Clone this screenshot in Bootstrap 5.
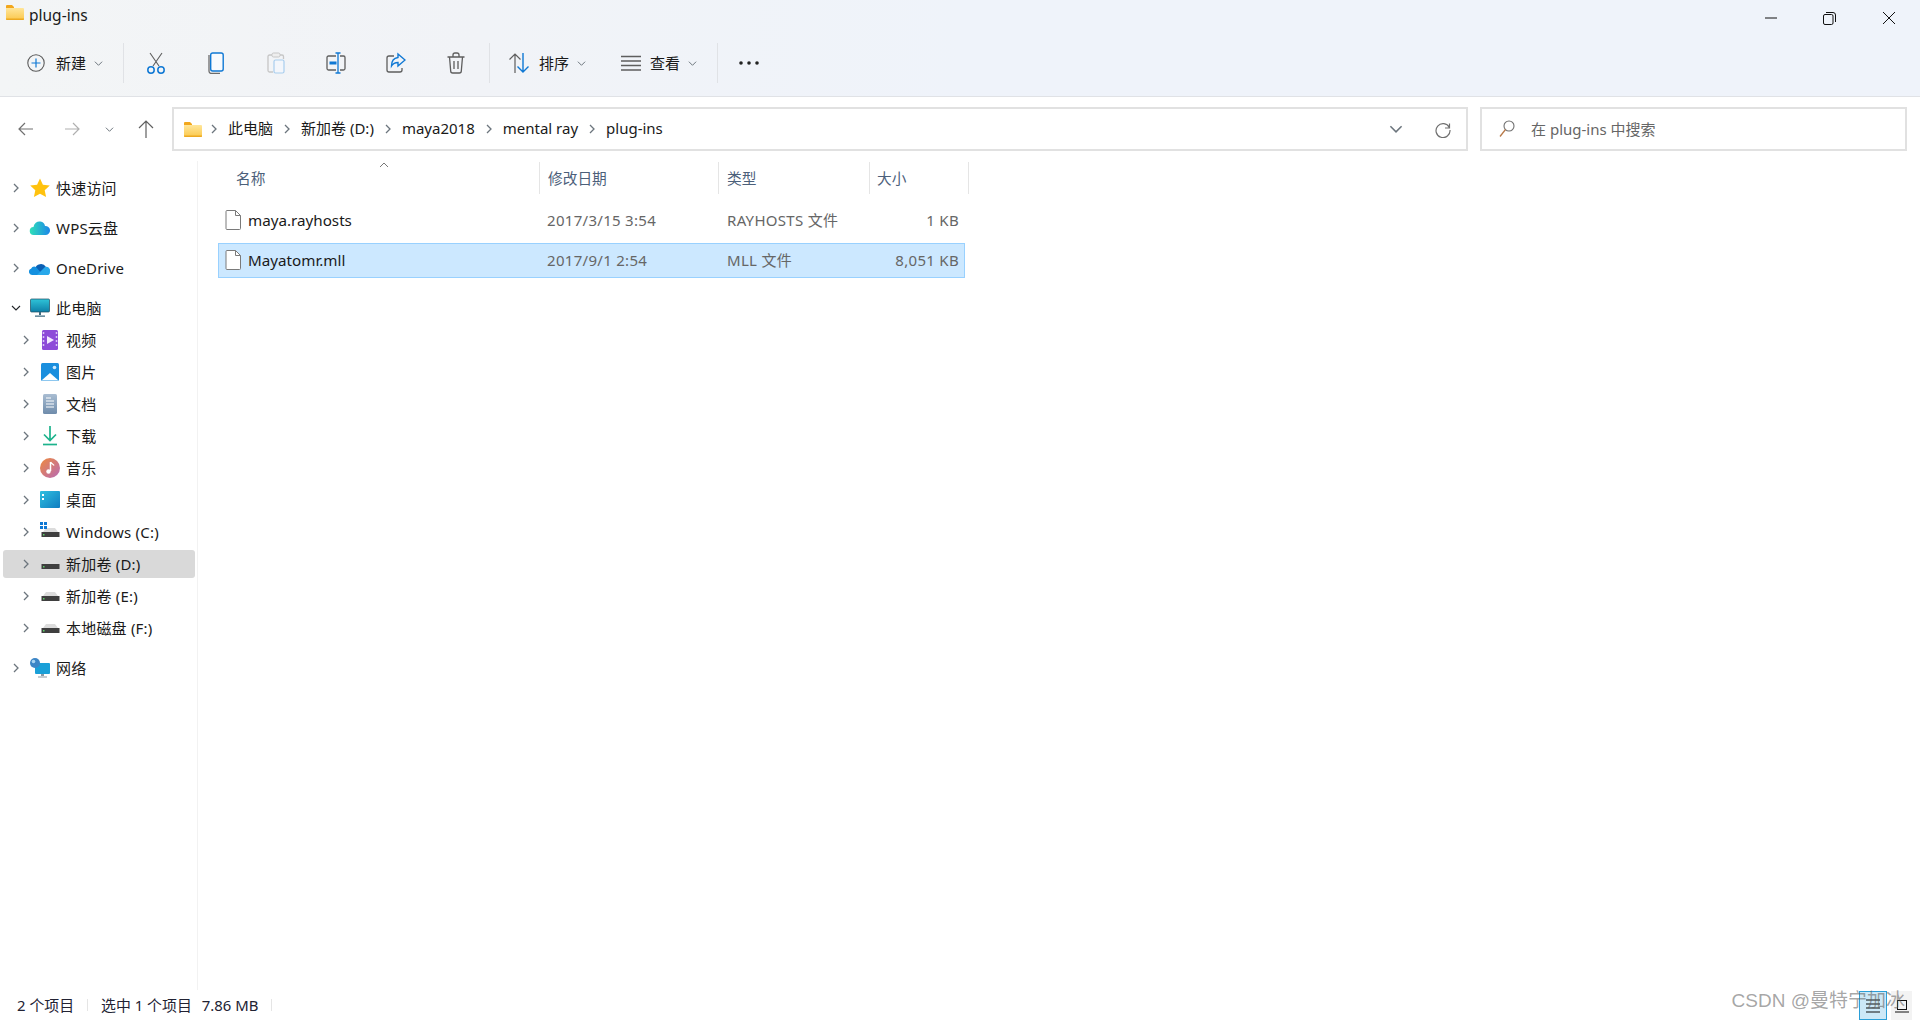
<!doctype html>
<html lang="zh">
<head>
<meta charset="utf-8">
<title>plug-ins</title>
<link href="https://cdn.jsdelivr.net/npm/bootstrap@5.3.0/dist/css/bootstrap.min.css" rel="stylesheet">
<style>
html,body{height:100%;margin:0}
body{font-family:"Noto Sans","Noto Sans CJK SC",sans-serif;font-size:15px;color:#1a1a1a;background:#fff;overflow:hidden;position:relative}
.shell{height:1020px}
.top-zone{height:97px;background:linear-gradient(90deg,#f3f5f6 0,#f1f3f7 25%,#eff3fa 50%,#eff3fa 100%);border-bottom:1px solid #e0e2e6}
.title-row{height:33px;padding-left:6px}
.title-text{margin-left:5px;font-size:15.5px;line-height:30px}
.win-btn{width:59px;height:36px;margin-top:0}
.win-btns{margin-right:2px}
.tool-row{height:63px;padding-bottom:3px}
.new-btn{width:111px;margin-left:12px}
.new-plus{margin-left:15px}
.tool-sep{width:1px;height:40px;background:#e0e2e6;margin:0 2px 0 0}
.sep-after{margin-left:3px}
.tool-icon{width:60px}
.tool-text{font-size:15px;margin:0 8px 0 9px}
.new-text{margin:0 8px 0 11px;font-size:15px}
.sort-btn{width:109px;margin-left:2px;padding-left:14px}
.view-btn{width:114px;padding-left:18px}
.more-btn{width:58px}
.addr-row{height:64px;padding-top:10px}
.nav-btn{width:46px;height:44px}
.nav-start{margin-left:3px}
.nav-small{width:28px}
.addr-box{width:1296px;height:44px;border:2px solid #e1e1e1;margin-left:3px;padding-left:10px;padding-bottom:1px}
.addr-crumb{font-size:15px;line-height:1}
.addr-sep{margin:0 9px}
.addr-sep-first{margin:0 9px 0 7px}
.addr-drop{margin:0 0 0 auto}
.addr-refresh{margin:0 14px 0 31px}
.search-box{width:427px;height:44px;border:2px solid #e1e1e1;margin-left:12px;padding-left:17px;color:#666;font-size:15px}
.search-label{margin-left:16px}
.body-row{height:829px}
.side{width:198px;border-right:1px solid #f2f2f2;padding-top:11px;flex:none}
.tree-row{height:32px;padding-left:11px}
.tree-sub{padding-left:21px}
.tree-gap{margin-bottom:8px}
.tree-text{margin-left:0;font-size:15px;letter-spacing:.2px;white-space:nowrap}
.tree-ic{width:22px;height:22px;margin:0 5px 0 8px;flex:none}
.tree-sel{height:32px;position:relative}
.tree-sel::before{content:"";position:absolute;left:3px;width:192px;top:2px;height:28px;background:#d9d9d9;border-radius:3px}
.tree-sel>*{position:relative}
.content-area{padding:1px 0 0 21px}
.col-hdr{height:32px;color:#4c607a;font-size:14.7px;position:relative}
.col-name{width:321px;padding-left:17px}
.col-date{width:179px;padding-left:8px}
.col-type{width:151px;padding-left:8px}
.col-size{width:99px;padding-left:7px}
.col-cell{border-right:1px solid #e5e5e5;height:32px}
.sort-caret{position:absolute;left:160px;top:0}
.list-rows{padding-top:9px;width:747px;margin-left:-1px}
.file-row{height:35px;border:1px solid transparent;color:#666;font-size:15px;letter-spacing:.3px;margin-bottom:5px}
.file-row.is-sel{background:#cce8ff;border-color:#99d1ff}
.f-name{width:328px;padding-left:6px;color:#1a1a1a;letter-spacing:0}
.f-label{margin-left:7px;font-size:15.2px}
.f-date{width:179px}
.f-type{width:151px;padding-left:1px}
.f-size{width:82px}
.status-row{height:30px;font-size:14.9px;color:#223;padding-left:17px;position:relative}
.st-sep{width:1px;height:12px;background:#e5e5e5;margin:0 13px 0 13px}
.st-size{margin-left:10px}
.wm{position:absolute;right:15px;bottom:5px;font-size:19px;color:rgba(90,90,90,.55);white-space:nowrap;font-family:"Liberation Sans","Noto Sans CJK SC",sans-serif;z-index:3}
.view-a,.view-b{position:absolute;bottom:0;height:29px}
.view-a{left:1859px;width:28px;background:#cce8f7;border:1px solid #2b9fd8}
.view-b{left:1891px;width:21px;background:#f3f3f3}
</style>
</head>
<body>
<svg width="0" height="0" class="position-absolute">
<defs>
<linearGradient id="fold" x1="0" y1="0" x2="0" y2="1"><stop offset="0" stop-color="#ffe69a"/><stop offset="1" stop-color="#fbc84d"/></linearGradient>
<symbol id="i-folder" viewBox="0 0 18 16"><path d="M0 2a1 1 0 0 1 1-1h5l2 2v2H0z" fill="#f2a71d"/><path d="M0 4h17a1 1 0 0 1 1 1v10a1 1 0 0 1-1 1H1a1 1 0 0 1-1-1z" fill="url(#fold)"/><path d="M0 14.600h18V15a1 1 0 0 1-1 1H1a1 1 0 0 1-1-1z" fill="#eda921"/></symbol>
<symbol id="chev-r" viewBox="0 0 10 10"><path d="M3 1l4 4-4 4" fill="none" stroke="currentColor" stroke-width="1.300"/></symbol>
<symbol id="chev-d" viewBox="0 0 10 10"><path d="M1 3l4 4 4-4" fill="none" stroke="currentColor" stroke-width="1.100"/></symbol>
<symbol id="i-file" viewBox="0 0 16 20"><path d="M1 1.500a1 1 0 0 1 1-1h8.500L15.500 5.500V18.500a1 1 0 0 1-1 1H2a1 1 0 0 1-1-1z" fill="#fff" stroke="#7a7a7a"/><path d="M10.500 .5v5h5" fill="none" stroke="#7a7a7a"/></symbol>
<symbol id="i-disk" viewBox="0 0 22 22"><path d="M4 11l3-4h9l3 4z" fill="#dcdcdc"/><rect x="2.500" y="11" width="18" height="5" fill="#3f3f3f"/><rect x="4" y="13" width="1.500" height="1.500" fill="#5fd06a"/></symbol>
</defs>
</svg>
<div class="shell d-flex flex-column">
  <div class="top-zone flex-none">
    <div class="title-row d-flex align-items-start">
      <svg width="18" height="16" class="mt-1"><use href="#i-folder"/></svg>
      <span class="title-text">plug-ins</span>
      <div class="win-btns ms-auto d-flex">
        <div class="win-btn d-flex align-items-center justify-content-center"><svg width="12" height="12" viewBox="0 0 12 12"><path d="M0 6h12" stroke="#111" stroke-width="1"/></svg></div>
        <div class="win-btn d-flex align-items-center justify-content-center"><svg width="13" height="13" viewBox="0 0 13 13"><rect x=".5" y="2.500" width="9.500" height="10" rx="1.500" fill="none" stroke="#111"/><path d="M3 .5h7a2.500 2.500 0 0 1 2.500 2.500v7" fill="none" stroke="#111"/></svg></div>
        <div class="win-btn d-flex align-items-center justify-content-center"><svg width="12" height="12" viewBox="0 0 12 12"><path d="M0 0l12 12M12 0L0 12" stroke="#111" stroke-width="1"/></svg></div>
      </div>
    </div>
    <div class="tool-row d-flex align-items-center">
      <div class="new-btn d-flex align-items-center">
        <svg width="18" height="18" viewBox="0 0 18 18" class="new-plus"><circle cx="9" cy="9" r="8.200" fill="none" stroke="#5a5a5a" stroke-width="1.100"/><path d="M9 4.500v9M4.500 9h9" stroke="#0f78d4" stroke-width="1.200"/></svg>
        <span class="new-text">新建</span>
        <svg width="9" height="9" class="text-secondary"><use href="#chev-d"/></svg>
      </div>
      <div class="tool-sep"></div>
      <div class="tool-icon d-flex justify-content-center"><svg width="20" height="22" viewBox="0 0 20 22"><path d="M4 1l9 13M16 1L7 14" stroke="#5e5e5e" stroke-width="1.100" fill="none"/><circle cx="5" cy="18" r="3.200" fill="none" stroke="#0f78d4" stroke-width="1.500"/><circle cx="15" cy="18" r="3.200" fill="none" stroke="#0f78d4" stroke-width="1.500"/></svg></div>
      <div class="tool-icon d-flex justify-content-center"><svg width="18" height="22" viewBox="0 0 18 22"><path d="M2 3v16a2.500 2.500 0 0 0 2.500 2.500H13" fill="none" stroke="#6b6b6b" stroke-width="1.300"/><rect x="3.700" y="1" width="12.500" height="18" rx="2" fill="#f8fafd" stroke="#0f78d4" stroke-width="1.400"/></svg></div>
      <div class="tool-icon d-flex justify-content-center"><svg width="18" height="22" viewBox="0 0 18 22"><path d="M5 3H2.500A1.500 1.500 0 0 0 1 4.500v14A1.500 1.500 0 0 0 2.500 20H6M13 3h2a1.500 1.500 0 0 1 1.500 1.500V7" fill="none" stroke="#c6c6c6" stroke-width="1.300"/><rect x="5" y="1" width="8" height="4" rx="1.500" fill="#eee" stroke="#c6c6c6"/><rect x="7" y="8" width="10" height="13" rx="1.500" fill="#f3f6fb" stroke="#a8cdee" stroke-width="1.200"/></svg></div>
      <div class="tool-icon d-flex justify-content-center"><svg width="20" height="22" viewBox="0 0 20 22"><path d="M10 4H2.500A1.500 1.500 0 0 0 1 5.500v11A1.500 1.500 0 0 0 2.500 18H10M14 4h3.500A1.500 1.500 0 0 1 19 5.500v11a1.500 1.500 0 0 1-1.500 1.500H14" fill="none" stroke="#5e5e5e" stroke-width="1.300"/><rect x="3.500" y="9.500" width="7" height="3" fill="#0f78d4"/><path d="M12 1v20M9.500 1h5M9.500 21h5" stroke="#0f78d4" stroke-width="1.300" fill="none"/></svg></div>
      <div class="tool-icon d-flex justify-content-center"><svg width="20" height="22" viewBox="0 0 20 22"><path d="M8 4H3a2 2 0 0 0-2 2v12a2 2 0 0 0 2 2h11a2 2 0 0 0 2-2v-2" fill="none" stroke="#5e5e5e" stroke-width="1.300"/><path d="M12 2l7 6-7 6v-3.500c-3 0-5 1-6.500 3.500 0-5 2.500-8 6.500-8.500z" fill="none" stroke="#0f78d4" stroke-width="1.400"/></svg></div>
      <div class="tool-icon d-flex justify-content-center"><svg width="20" height="22" viewBox="0 0 20 22"><path d="M1.500 5h17M7 5V3a2 2 0 0 1 2-2h2a2 2 0 0 1 2 2v2M3.500 5l1.200 14a2 2 0 0 0 2 2h6.600a2 2 0 0 0 2-2L16.500 5M8 9v8M12 9v8" fill="none" stroke="#5e5e5e" stroke-width="1.300"/></svg></div>
      <div class="tool-sep sep-after"></div>
      <div class="sort-btn d-flex align-items-center">
        <svg width="22" height="22" viewBox="0 0 22 22"><path d="M7 21V2M1.500 7.500L7 2l5.500 5.500" fill="none" stroke="#5e5e5e" stroke-width="1.200"/><path d="M15 1v19M9.500 14.500L15 20l5.500-5.500" fill="none" stroke="#0f78d4" stroke-width="1.400"/></svg>
        <span class="tool-text">排序</span>
        <svg width="9" height="9" class="text-secondary"><use href="#chev-d"/></svg>
      </div>
      <div class="view-btn d-flex align-items-center">
        <svg width="20" height="16" viewBox="0 0 20 16"><path d="M0 1.500h20M0 6h20M0 10.500h20M0 15h20" stroke="#5e5e5e" stroke-width="1.300"/></svg>
        <span class="tool-text">查看</span>
        <svg width="9" height="9" class="text-secondary"><use href="#chev-d"/></svg>
      </div>
      <div class="tool-sep"></div>
      <div class="more-btn d-flex justify-content-center"><svg width="20" height="4" viewBox="0 0 20 4"><circle cx="2" cy="2" r="1.800" fill="#222"/><circle cx="10" cy="2" r="1.800" fill="#222"/><circle cx="18" cy="2" r="1.800" fill="#222"/></svg></div>
    </div>
  </div>

  <div class="addr-row d-flex flex-none">
    <div class="nav-btn nav-start d-flex align-items-center justify-content-center"><svg width="16" height="14" viewBox="0 0 16 14"><path d="M15 7H1M7 1L1 7l6 6" fill="none" stroke="#707070" stroke-width="1.200"/></svg></div>
    <div class="nav-btn d-flex align-items-center justify-content-center"><svg width="16" height="14" viewBox="0 0 16 14"><path d="M1 7h14M9 1l6 6-6 6" fill="none" stroke="#b0b0b0" stroke-width="1.200"/></svg></div>
    <div class="nav-btn nav-small d-flex align-items-center justify-content-center"><svg width="9" height="9" class="text-secondary"><use href="#chev-d"/></svg></div>
    <div class="nav-btn d-flex align-items-center justify-content-center"><svg width="16" height="18" viewBox="0 0 16 18"><path d="M8 18V1M1 8l7-7 7 7" fill="none" stroke="#606060" stroke-width="1.200"/></svg></div>
    <div class="addr-box d-flex align-items-center addr-crumb">
      <svg width="18" height="16"><use href="#i-folder"/></svg>
      <svg width="10" height="10" class="addr-sep-first text-secondary"><use href="#chev-r"/></svg><span>此电脑</span>
      <svg width="10" height="10" class="addr-sep text-secondary"><use href="#chev-r"/></svg><span>新加卷 (D:)</span>
      <svg width="10" height="10" class="addr-sep text-secondary"><use href="#chev-r"/></svg><span>maya2018</span>
      <svg width="10" height="10" class="addr-sep text-secondary"><use href="#chev-r"/></svg><span>mental ray</span>
      <svg width="10" height="10" class="addr-sep text-secondary"><use href="#chev-r"/></svg><span>plug-ins</span>
      <svg width="14" height="14" class="addr-drop text-secondary"><use href="#chev-d"/></svg>
      <svg width="18" height="18" viewBox="0 0 18 18" class="addr-refresh"><path d="M15.500 3.500V8H11M15.300 7.500A7 7 0 1 0 16 10" fill="none" stroke="#707070" stroke-width="1.200"/></svg>
    </div>
    <div class="search-box d-flex align-items-center">
      <svg width="16" height="18" viewBox="0 0 16 18"><circle cx="10" cy="6" r="5" fill="none" stroke="#707070" stroke-width="1.100"/><path d="M6.500 9.500L1 16.500" stroke="#b87a4a" stroke-width="1.300"/></svg>
      <span class="search-label">在 plug-ins 中搜索</span>
    </div>
  </div>

  <div class="body-row d-flex flex-grow-1">
    <div class="side">
      <div class="tree-row tree-gap d-flex align-items-center"><svg width="10" height="10" class="text-secondary"><use href="#chev-r"/></svg><svg class="tree-ic" viewBox="0 0 22 22"><path d="M11 1.500l2.900 6.300 6.900.8-5.100 4.700 1.400 6.800-6.100-3.400-6.100 3.400 1.400-6.800L1.200 8.600l6.900-.8z" fill="#ffc20e"/></svg><span class="tree-text">快速访问</span></div>
      <div class="tree-row tree-gap d-flex align-items-center"><svg width="10" height="10" class="text-secondary"><use href="#chev-r"/></svg><svg class="tree-ic" viewBox="0 0 22 22"><defs><linearGradient id="wps" x1="0" y1="0" x2="1" y2="0"><stop offset="0" stop-color="#2fe0b8"/><stop offset="1" stop-color="#1c86e8"/></linearGradient></defs><path d="M5 18a4 4 0 0 1-.500-8 6 6 0 0 1 7-5.500 5.500 5.500 0 0 1 4.500 4.500 4.500 4.500 0 0 1 1 9z" fill="url(#wps)"/></svg><span class="tree-text">WPS云盘</span></div>
      <div class="tree-row tree-gap d-flex align-items-center"><svg width="10" height="10" class="text-secondary"><use href="#chev-r"/></svg><svg class="tree-ic" viewBox="0 0 22 22"><path d="M6 12a6 6 0 0 1 11-2l-6 6-7-2z" fill="#0a5fb4"/><path d="M3 18a3.200 3.200 0 0 1-1-6.200A4 4 0 0 1 7 10l7 8z" fill="#1490df"/><path d="M8 18l8-8a3.800 3.800 0 0 1 5 4.500 3.500 3.500 0 0 1-1.500 3.500z" fill="#28a8ea"/></svg><span class="tree-text">OneDrive</span></div>
      <div class="tree-row d-flex align-items-center"><svg width="10" height="10" class="text-dark"><use href="#chev-d"/></svg><svg class="tree-ic" viewBox="0 0 22 22"><defs><linearGradient id="mon" x1="0" y1="0" x2="0" y2="1"><stop offset="0" stop-color="#2fc4d8"/><stop offset="1" stop-color="#0e7fa8"/></linearGradient></defs><rect x="1.500" y="2" width="19" height="13" rx="1" fill="url(#mon)" stroke="#1c4a5e" stroke-width=".7"/><path d="M10 15h2v3h-2zM6 18.500h10v1.200H6z" fill="#3d6a80"/></svg><span class="tree-text">此电脑</span></div>
      <div class="tree-row tree-sub d-flex align-items-center"><svg width="10" height="10" class="text-secondary"><use href="#chev-r"/></svg><svg class="tree-ic" viewBox="0 0 22 22"><rect x="3" y="1" width="16" height="20" rx="1.500" fill="#8d4bd8"/><path d="M8 7l7 4-7 4z" fill="#f2e8ff"/><path d="M4.500 3v16M17.500 3v16" stroke="#d8c2f5" stroke-width="1.500" stroke-dasharray="2 2"/></svg><span class="tree-text">视频</span></div>
      <div class="tree-row tree-sub d-flex align-items-center"><svg width="10" height="10" class="text-secondary"><use href="#chev-r"/></svg><svg class="tree-ic" viewBox="0 0 22 22"><rect x="2" y="2" width="18" height="18" rx="1.500" fill="#1b8fde"/><path d="M2.500 19.500L11 12l8.500 7.500z" fill="#fff"/><circle cx="15.500" cy="6.500" r="1.800" fill="#cfeaff"/></svg><span class="tree-text">图片</span></div>
      <div class="tree-row tree-sub d-flex align-items-center"><svg width="10" height="10" class="text-secondary"><use href="#chev-r"/></svg><svg class="tree-ic" viewBox="0 0 22 22"><defs><linearGradient id="doc" x1="0" y1="0" x2="0" y2="1"><stop offset="0" stop-color="#a9bdd2"/><stop offset="1" stop-color="#6f8cab"/></linearGradient></defs><rect x="4" y="1" width="14" height="20" rx="1.500" fill="url(#doc)"/><path d="M7 8h8M7 11h8M7 14h8M7 5h5" stroke="#fff" stroke-width="1"/></svg><span class="tree-text">文档</span></div>
      <div class="tree-row tree-sub d-flex align-items-center"><svg width="10" height="10" class="text-secondary"><use href="#chev-r"/></svg><svg class="tree-ic" viewBox="0 0 22 22"><path d="M11 1v14M5 9.500l6 6 6-6" fill="none" stroke="#1db38c" stroke-width="1.700"/><path d="M4 19.500h14" stroke="#1db38c" stroke-width="1.700"/></svg><span class="tree-text">下载</span></div>
      <div class="tree-row tree-sub d-flex align-items-center"><svg width="10" height="10" class="text-secondary"><use href="#chev-r"/></svg><svg class="tree-ic" viewBox="0 0 22 22"><defs><linearGradient id="mus" x1="0" y1="0" x2="1" y2="1"><stop offset="0" stop-color="#ef8a3c"/><stop offset="1" stop-color="#b76ab8"/></linearGradient></defs><circle cx="11" cy="11" r="10" fill="url(#mus)"/><path d="M11.500 5v9" stroke="#fff" stroke-width="1.500"/><path d="M11.500 5c1 2 3 2 3.500 3.500" fill="none" stroke="#fff" stroke-width="1.300"/><circle cx="9.500" cy="14.500" r="2.200" fill="#fff"/></svg><span class="tree-text">音乐</span></div>
      <div class="tree-row tree-sub d-flex align-items-center"><svg width="10" height="10" class="text-secondary"><use href="#chev-r"/></svg><svg class="tree-ic" viewBox="0 0 22 22"><defs><linearGradient id="dsk" x1="0" y1="0" x2="1" y2="1"><stop offset="0" stop-color="#2fc0e0"/><stop offset="1" stop-color="#0f7cc0"/></linearGradient></defs><rect x="1" y="2" width="20" height="17" rx="1" fill="url(#dsk)"/><rect x="3" y="5" width="2" height="2" fill="#fff"/><rect x="3" y="9" width="2" height="2" fill="#fff"/></svg><span class="tree-text">桌面</span></div>
      <div class="tree-row tree-sub d-flex align-items-center"><svg width="10" height="10" class="text-secondary"><use href="#chev-r"/></svg><svg class="tree-ic" viewBox="0 0 22 22"><use href="#i-disk"/><path d="M1 1h3v3H1zM5 1h3v3H5zM1 5h3v3H1zM5 5h3v3H5z" fill="#0f78d4"/></svg><span class="tree-text">Windows (C:)</span></div>
      <div class="tree-row tree-sub tree-sel d-flex align-items-center"><svg width="10" height="10" class="text-secondary"><use href="#chev-r"/></svg><svg class="tree-ic" viewBox="0 0 22 22"><use href="#i-disk"/></svg><span class="tree-text">新加卷 (D:)</span></div>
      <div class="tree-row tree-sub d-flex align-items-center"><svg width="10" height="10" class="text-secondary"><use href="#chev-r"/></svg><svg class="tree-ic" viewBox="0 0 22 22"><use href="#i-disk"/></svg><span class="tree-text">新加卷 (E:)</span></div>
      <div class="tree-row tree-sub tree-gap d-flex align-items-center"><svg width="10" height="10" class="text-secondary"><use href="#chev-r"/></svg><svg class="tree-ic" viewBox="0 0 22 22"><use href="#i-disk"/></svg><span class="tree-text">本地磁盘 (F:)</span></div>
      <div class="tree-row d-flex align-items-center"><svg width="10" height="10" class="text-secondary"><use href="#chev-r"/></svg><svg class="tree-ic" viewBox="0 0 22 22"><rect x="6" y="6" width="15" height="11" rx="1" fill="#1aa0d8"/><path d="M12 17h3v2h-3zM9 19.500h9v1H9z" fill="#8a9aa6"/><circle cx="6" cy="6" r="5" fill="#3d86c6"/><circle cx="4.500" cy="4.500" r="1.800" fill="#a8d4f2"/></svg><span class="tree-text">网络</span></div>
    </div>
    <div class="content-area flex-grow-1">
      <div class="col-hdr d-flex">
        <div class="col-cell col-name d-flex align-items-center">名称</div>
        <div class="col-cell col-date d-flex align-items-center">修改日期</div>
        <div class="col-cell col-type d-flex align-items-center">类型</div>
        <div class="col-cell col-size d-flex align-items-center">大小</div>
        <svg width="10" height="6" viewBox="0 0 10 6" class="sort-caret"><path d="M1 5l4-4 4 4" fill="none" stroke="#777" stroke-width="1"/></svg>
      </div>
      <div class="list-rows">
        <div class="file-row d-flex align-items-center">
          <div class="f-name d-flex align-items-center"><svg width="16" height="20"><use href="#i-file"/></svg><span class="f-label">maya.rayhosts</span></div>
          <div class="f-date">2017/3/15 3:54</div>
          <div class="f-type">RAYHOSTS 文件</div>
          <div class="f-size text-end">1 KB</div>
        </div>
        <div class="file-row is-sel d-flex align-items-center">
          <div class="f-name d-flex align-items-center"><svg width="16" height="20"><use href="#i-file"/></svg><span class="f-label">Mayatomr.mll</span></div>
          <div class="f-date">2017/9/1 2:54</div>
          <div class="f-type">MLL 文件</div>
          <div class="f-size text-end">8,051 KB</div>
        </div>
      </div>
    </div>
  </div>

  <div class="status-row d-flex align-items-center flex-none">
    <span>2 个项目</span><span class="st-sep"></span><span>选中 1 个项目</span><span class="st-size">7.86 MB</span><span class="st-sep"></span>
    <div class="view-a d-flex align-items-center justify-content-center"><svg width="16" height="16" viewBox="0 0 16 16"><path d="M1 2h14M1 6h14M1 10h14M1 14h14" stroke="#111"/></svg></div>
    <div class="view-b d-flex align-items-center justify-content-center"><svg width="14" height="14" viewBox="0 0 14 14"><rect x="2.500" y="1.500" width="9" height="9" fill="none" stroke="#111"/><path d="M0 13h14" stroke="#111"/></svg></div>
    <div class="wm">CSDN @曼特宁加冰</div>
  </div>
</div>
<script src="https://cdn.jsdelivr.net/npm/bootstrap@5.3.0/dist/js/bootstrap.bundle.min.js"></script>
</body>
</html>
